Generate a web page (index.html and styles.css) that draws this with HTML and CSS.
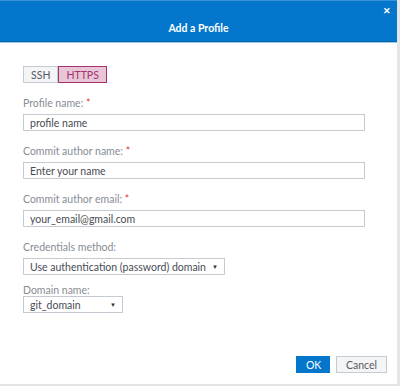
FILE: index.html
```html
<!DOCTYPE html>
<html lang="en">
<head>
    <meta charset="UTF-8">
    <title>Add a Profile</title>
    <link rel="stylesheet" href="styles.css">
</head>
<body>
    <div class="dialog">
        <div class="dialog-header">
            <span class="close">&#10005;</span>
            <h1>Add a Profile</h1>
        </div>

        <div class="dialog-body">
            <div class="toggle">
                <button type="button" class="toggle-btn">SSH</button>
                <button type="button" class="toggle-btn active">HTTPS</button>
            </div>

            <div class="field">
                <label>Profile name: <span class="req">*</span></label>
                <input type="text" value="profile name">
            </div>
            <div class="field">
                <label>Commit author name: <span class="req">*</span></label>
                <input type="text" value="Enter your name">
            </div>
            <div class="field">
                <label>Commit author email: <span class="req">*</span></label>
                <input type="text" value="your_email@gmail.com">
            </div>
            <div class="field">
                <label>Credentials method:</label>
                <div class="select select-wide">
                    <span>Use authentication (password) domain</span>
                    <span class="arrow">&#9660;</span>
                </div>
            </div>
            <div class="field tight">
                <label>Domain name:</label>
                <div class="select select-small">
                    <span>git_domain</span>
                    <span class="arrow">&#9660;</span>
                </div>
            </div>
        </div>

        <div class="dialog-footer">
            <button type="button" class="btn btn-primary">OK</button>
            <button type="button" class="btn">Cancel</button>
        </div>
    </div>
</body>
</html>
```

FILE: styles.css
```css
body {
    margin: 0;
    background-color: #e4e5e7;
    font-family: Lato, "Open Sans", sans-serif;
    font-size: 10.5px;
}
.dialog {
    width: 397px;
    height: 384px;
    background-color: #fff;
    display: flex;
    flex-direction: column;
}
.dialog-header {
    height: 40px;
    background-color: #0477cc;
    border-top: 1px solid #3a93d8;
    border-bottom: 1px solid #0463ad;
    box-shadow: 0 1px 0 #9cc8ec;
    position: relative;
    display: flex;
    align-items: flex-end;
    justify-content: center;
}
.dialog-header h1 {
    margin: 0 0 7px;
    color: #fff;
    font-size: 10.5px;
    font-weight: bold;
}
.close {
    position: absolute;
    top: 4px;
    right: 6px;
    color: #fff;
    font-size: 9px;
    font-weight: bold;
}
.dialog-body {
    padding: 24px 0 0 23px;
    flex: 1;
}
.toggle {
    display: flex;
    margin-bottom: 13px;
}
.toggle-btn {
    height: 17px;
    padding: 0 7px;
    font-family: inherit;
    font-size: 10.5px;
    color: #555a62;
    background-color: #f4f5f7;
    border: 1px solid #c6cad1;
}
.toggle-btn.active {
    color: #a3336f;
    background-color: #e9c6d7;
    border-color: #a3336f;
}
.field {
    display: flex;
    flex-direction: column;
    align-items: flex-start;
    margin-bottom: 13px;
}
.field label {
    line-height: 14px;
    margin-bottom: 4px;
    color: #878c95;
}
.field.tight {
    margin-top: -4px;
}
.field.tight label {
    line-height: 12px;
    margin-bottom: 0;
}
.req {
    color: #e03a3a;
}
input {
    box-sizing: border-box;
    width: 342px;
    height: 17px;
    margin: 0;
    padding: 0 6px;
    font-family: inherit;
    font-size: 10.5px;
    color: #484c54;
    border: 1px solid #c6cad1;
}
.select {
    box-sizing: border-box;
    height: 17px;
    padding: 0 6px;
    display: flex;
    align-items: center;
    justify-content: space-between;
    white-space: nowrap;
    color: #484c54;
    border: 1px solid #c6cad1;
}
.select-wide {
    width: 202px;
}
.select-small {
    width: 100px;
}
.arrow {
    font-size: 6px;
    color: #333;
}
.dialog-footer {
    display: flex;
    justify-content: flex-end;
    gap: 6px;
    padding: 0 10px 11px 0;
}
.btn {
    height: 17px;
    padding: 0 9px;
    font-family: inherit;
    font-size: 10.5px;
    color: #555a62;
    background-color: #f4f5f7;
    border: 1px solid #c6cad1;
}
.btn-primary {
    width: 34px;
    color: #fff;
    background-color: #0477cc;
    border-color: #0477cc;
}
```
